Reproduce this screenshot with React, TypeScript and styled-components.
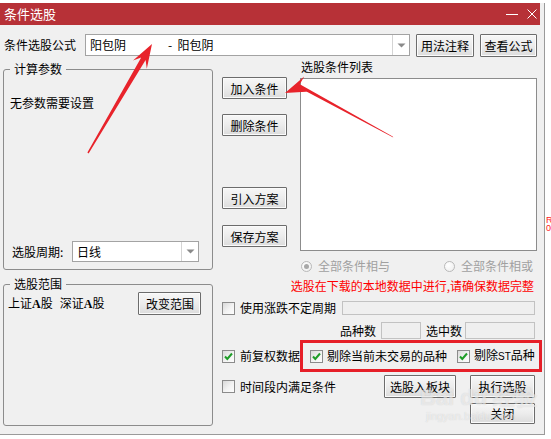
import React from "react";
import styled, { createGlobalStyle } from "styled-components";

const Global = createGlobalStyle`
  html, body { margin: 0; padding: 0; background: #fff; }
  body {
    font-family: "Noto Sans CJK SC", "Noto Sans", sans-serif;
    font-size: 12px;
    line-height: 14px;
    color: #000;
  }
  * { box-sizing: border-box; }
`;

const Page = styled.div`
  position: relative;
  width: 551px;
  height: 439px;
  overflow: hidden;
  display: flex;
  align-items: flex-start;
  padding-top: 3px;
  background: #fff;
`;

const Dialog = styled.div`
  width: 545px;
  height: 432px;
  flex-shrink: 0;
  background: #f0f0f0;
  border-right: 1px solid #9a9a9a;
  border-bottom: 1px solid #9a9a9a;
  display: flex;
  flex-direction: column;
`;

const OuterStrip = styled.div`
  flex: 1;
  height: 100%;
  padding-top: 213px;
  padding-left: 1px;
  color: #ff2020;
  font-family: "Liberation Sans", sans-serif;
  font-size: 9px;
  line-height: 8px;
`;

const TitleBar = styled.div`
  height: 22px;
  margin-right: 4px;
  background: #b73137;
  color: #fff;
  font-size: 13px;
  display: flex;
  align-items: center;
  padding-left: 4px;
`;

const WinControls = styled.div`
  margin-left: auto;
  display: flex;
  align-items: center;
  gap: 9px;
  padding-right: 3px;
`;

const Row = styled.div<{ $mt?: number; $h: number; $pl?: number; $pr?: number; $justify?: string }>`
  display: flex;
  align-items: center;
  margin-top: ${(p) => p.$mt ?? 0}px;
  height: ${(p) => p.$h}px;
  padding-left: ${(p) => p.$pl ?? 0}px;
  padding-right: ${(p) => p.$pr ?? 0}px;
  justify-content: ${(p) => p.$justify ?? "flex-start"};
  white-space: nowrap;
`;

const Label = styled.span<{ $w?: number; $ml?: number; $color?: string }>`
  display: inline-block;
  ${(p) => (p.$w ? `width: ${p.$w}px;` : "")}
  margin-left: ${(p) => p.$ml ?? 0}px;
  color: ${(p) => p.$color ?? "#000"};
  white-space: nowrap;
  flex-shrink: 0;
`;

const Combo = styled.div<{ $w: number; $h: number }>`
  width: ${(p) => p.$w}px;
  height: ${(p) => p.$h}px;
  background: #fff;
  border: 1px solid #a3a3a3;
  display: flex;
  align-items: center;
  flex-shrink: 0;
`;

const ComboText = styled.div`
  flex: 1;
  padding-left: 4px;
  display: flex;
  align-items: center;
  white-space: pre;
`;

const ComboName = styled.span`
  display: inline-block;
  width: 78px;
`;

const ComboArrow = styled.div`
  width: 17px;
  height: 100%;
  border-left: 1px solid #d4d4d4;
  display: flex;
  align-items: center;
  justify-content: center;
`;

const Btn = styled.button<{ $w: number; $h: number; $mt?: number; $ml?: number }>`
  width: ${(p) => p.$w}px;
  height: ${(p) => p.$h}px;
  margin: ${(p) => p.$mt ?? 0}px 0 0 ${(p) => p.$ml ?? 0}px;
  padding: 0;
  flex-shrink: 0;
  font-family: inherit;
  font-size: 12px;
  color: #000;
  border: 1px solid #6c6c6c;
  border-radius: 1px;
  box-shadow: inset 0 0 0 1px #fbfbfb;
  background: linear-gradient(#f7f7f7 0%, #ececec 50%, #dcdcdc 100%);
  display: flex;
  align-items: center;
  justify-content: center;
`;

const Main = styled.div`
  margin-top: 4px;
  display: flex;
  padding-left: 3px;
`;

const LeftCol = styled.div`
  width: 210px;
  padding-top: 2px;
  display: flex;
  flex-direction: column;
  gap: 7px;
`;

const Group = styled.fieldset`
  margin: 0;
  padding: 0;
  min-width: 0;
  border: 1px solid #8c8c8c;
  border-radius: 3px;
`;

const Legend = styled.legend`
  margin-left: 6px;
  padding: 0 4px;
  font-size: 12px;
  line-height: 14px;
`;

const GroupBody = styled.div<{ $h: number; $pt: number; $pb: number; $pl?: number }>`
  height: ${(p) => p.$h}px;
  padding: ${(p) => p.$pt}px 6px ${(p) => p.$pb}px ${(p) => p.$pl ?? 6}px;
  display: flex;
  flex-direction: column;
  justify-content: space-between;
`;

const Select = styled.div`
  width: 127px;
  height: 21px;
  background: #fff;
  border: 1px solid #a3a3a3;
  display: flex;
  align-items: center;
  flex-shrink: 0;
`;

const BoldA = styled.span`
  font-family: "Liberation Serif", serif;
  font-weight: bold;
  font-size: 12px;
`;

const RightPart = styled.div`
  width: 315px;
  margin-left: 9px;
  display: flex;
  flex-direction: column;
`;

const TopRight = styled.div`
  display: flex;
  height: 191px;
`;

const ButtonCol = styled.div`
  width: 65px;
  padding-top: 17px;
  display: flex;
  flex-direction: column;
`;

const ListCol = styled.div`
  width: 237px;
  margin-left: 13px;
  display: flex;
  flex-direction: column;
`;

const ListLabel = styled.div`
  height: 14px;
  padding-left: 1px;
`;

const ListBox = styled.div`
  margin-top: 4px;
  height: 173px;
  background: #fff;
  border: 1px solid #8c8c8c;
`;

const RadioItem = styled.span`
  display: inline-flex;
  align-items: center;
  gap: 6px;
  color: #a0a0a0;
`;

const RadioCircle = styled.span<{ $on?: boolean }>`
  width: 11px;
  height: 11px;
  border-radius: 50%;
  border: 1px solid #b9b9b9;
  background: radial-gradient(circle at 35% 35%, #ffffff 0%, #ececec 100%);
  display: inline-flex;
  align-items: center;
  justify-content: center;
  &::after {
    content: "";
    width: 5px;
    height: 5px;
    border-radius: 50%;
    background: ${(p) => (p.$on ? "#a8a8a8" : "transparent")};
  }
`;

const Note = styled.div`
  margin-top: 6px;
  height: 14px;
  text-align: right;
  padding-right: 3px;
  color: #ff0000;
  white-space: nowrap;
`;

const Box = styled.span<{ $ml?: number }>`
  width: 13px;
  height: 13px;
  flex-shrink: 0;
  margin-left: ${(p) => p.$ml ?? 0}px;
  border: 1px solid #8b8b8b;
  background: linear-gradient(135deg, #d9d9d9 0%, #f3f3f3 55%, #fdfdfd 100%);
  display: inline-flex;
  align-items: center;
  justify-content: center;
`;

const CheckText = styled.span<{ $ml?: number }>`
  margin-left: ${(p) => p.$ml ?? 5}px;
  white-space: nowrap;
`;

const Field = styled.div<{ $w: number; $h: number; $ml?: number; $flex?: boolean }>`
  ${(p) => (p.$flex ? "flex: 1;" : `width: ${p.$w}px;`)}
  height: ${(p) => p.$h}px;
  margin-left: ${(p) => p.$ml ?? 0}px;
  border: 1px solid #c2c2c2;
  background: #efefef;
  flex-shrink: 0;
`;

const Highlight = styled.div`
  width: 242px;
  height: 32px;
  margin-right: -5px;
  margin-left: auto;
  border: 3px solid #e61f28;
  display: flex;
  align-items: center;
  padding-left: 7px;
`;

const SmallLatin = styled.span`
  font-family: "Liberation Sans", sans-serif;
  font-size: 10px;
`;

const Overlay = styled.svg`
  position: absolute;
  left: 0;
  top: 0;
  pointer-events: none;
`;

const Watermark = styled.div`
  position: absolute;
  left: 420px;
  top: 386px;
  color: rgba(255, 255, 255, 0.55);
  text-shadow: 0 0 1px rgba(120, 120, 120, 0.3);
  font-family: "Liberation Sans", sans-serif;
  pointer-events: none;
`;

const WmBig = styled.div`
  font-size: 22px;
  font-weight: bold;
  line-height: 24px;
`;

const WmSmall = styled.div`
  font-size: 11px;
  line-height: 12px;
  padding-left: 6px;
`;

function Check({ on, ml }: { on?: boolean; ml?: number }) {
  return (
    <Box $ml={ml}>
      {on && (
        <svg width="11" height="11" viewBox="0 0 11 11">
          <path d="M2 5.5 L4.3 8 L9 2.5" stroke="#1f9d28" strokeWidth="2" fill="none" />
        </svg>
      )}
    </Box>
  );
}

function DownArrow() {
  return (
    <svg width="9" height="5" viewBox="0 0 9 5">
      <path d="M0.5 0.5 L8.5 0.5 L4.5 4.5 Z" fill="#8a8a8a" />
    </svg>
  );
}

export default function App() {
  return (
    <Page>
      <Global />
      <Dialog>
        <TitleBar>
          条件选股
          <WinControls>
            <svg width="12" height="10" viewBox="0 0 12 10">
              <line x1="0" y1="5.5" x2="12" y2="5.5" stroke="#fff" strokeWidth="1" />
            </svg>
            <svg width="10" height="10" viewBox="0 0 10 10">
              <path d="M0.5 0.5 L9.5 9.5 M9.5 0.5 L0.5 9.5" stroke="#fff" strokeWidth="1" />
            </svg>
          </WinControls>
        </TitleBar>

        <Row $mt={9} $h={22} $pl={4}>
          <Label $w={81}>条件选股公式</Label>
          <Combo $w={325} $h={22}>
            <ComboText>
              <ComboName>阳包阴</ComboName>-  阳包阴
            </ComboText>
            <ComboArrow>
              <DownArrow />
            </ComboArrow>
          </Combo>
          <Btn $w={58} $h={23} $ml={6}>用法注释</Btn>
          <Btn $w={57} $h={23} $ml={6}>查看公式</Btn>
        </Row>

        <Main>
          <LeftCol>
            <Group>
              <Legend>计算参数</Legend>
              <GroupBody $h={193} $pt={20} $pb={7}>
                <div>无参数需要设置</div>
                <Row $h={21}>
                  <Label $w={60} $ml={2}>选股周期:</Label>
                  <Select>
                    <ComboText>日线</ComboText>
                    <ComboArrow>
                      <DownArrow />
                    </ComboArrow>
                  </Select>
                </Row>
              </GroupBody>
            </Group>
            <Group>
              <Legend>选股范围</Legend>
              <GroupBody $h={134} $pt={1} $pb={0} $pl={4}>
                <Row $h={23}>
                  <Label>
                    上证<BoldA>A</BoldA>股
                  </Label>
                  <Label $ml={7}>
                    深证<BoldA>A</BoldA>股
                  </Label>
                  <Btn $w={63} $h={23} $ml={34}>改变范围</Btn>
                </Row>
                <div />
              </GroupBody>
            </Group>
          </LeftCol>

          <RightPart>
            <TopRight>
              <ButtonCol>
                <Btn $w={65} $h={22}>加入条件</Btn>
                <Btn $w={65} $h={22} $mt={15}>删除条件</Btn>
                <Btn $w={65} $h={22} $mt={51}>引入方案</Btn>
                <Btn $w={65} $h={22} $mt={16}>保存方案</Btn>
              </ButtonCol>
              <ListCol>
                <ListLabel>选股条件列表</ListLabel>
                <ListBox />
              </ListCol>
            </TopRight>

            <Row $mt={8} $h={14} $pl={79} $pr={4} $justify="space-between">
              <RadioItem>
                <RadioCircle $on />
                全部条件相与
              </RadioItem>
              <RadioItem>
                <RadioCircle />
                全部条件相或
              </RadioItem>
            </Row>

            <Note>选股在下载的本地数据中进行,请确保数据完整</Note>

            <Row $mt={8} $h={14} $pr={2}>
              <Check />
              <CheckText>使用涨跌不定周期</CheckText>
              <Field $w={0} $h={14} $ml={6} $flex />
            </Row>

            <Row $mt={7} $h={17} $pr={2} $justify="flex-end">
              <Label>品种数</Label>
              <Field $w={40} $h={17} $ml={5} />
              <Label $ml={5}>选中数</Label>
              <Field $w={70} $h={17} $ml={3} />
            </Row>

            <Row $mt={1} $h={32}>
              <Check on />
              <CheckText>前复权数据</CheckText>
              <Highlight>
                <Check on />
                <CheckText $ml={4}>剔除当前未交易的品种</CheckText>
                <Check on ml={10} />
                <CheckText $ml={4}>
                  剔除<SmallLatin>ST</SmallLatin>品种
                </CheckText>
              </Highlight>
            </Row>

            <Row $mt={3} $h={23} $pr={2}>
              <Check />
              <CheckText>时间段内满足条件</CheckText>
              <Btn $w={72} $h={23} $ml={48}>选股入板块</Btn>
              <Btn $w={65} $h={23} $ml={14}>执行选股</Btn>
            </Row>

            <Row $mt={5} $h={21} $pr={2} $justify="flex-end">
              <Btn $w={65} $h={21}>关闭</Btn>
            </Row>
          </RightPart>
        </Main>
      </Dialog>
      <OuterStrip>
        R
        <br />0
      </OuterStrip>

      <Watermark>
        <WmBig>Bai du 经验</WmBig>
        <WmSmall>jingyan.baidu.com</WmSmall>
      </Watermark>

      <Overlay width="551" height="439" viewBox="0 0 551 439">
        <polygon
          points="88.6,153.4 145.6,59.9 146.8,68.7 152,44 133,60.6 141.2,57.4 87.4,152.6"
          fill="#e8232b"
        />
        <polygon
          points="393.3,137.6 301.7,88.9 310.2,91.4 285,93 304.2,76.5 299.8,84.3 392.7,136.4"
          fill="#e8232b"
        />
      </Overlay>
    </Page>
  );
}
